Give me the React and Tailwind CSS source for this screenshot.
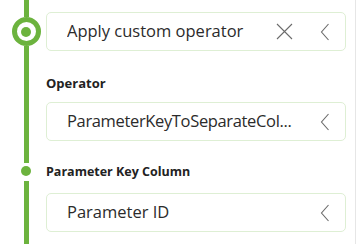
import React from "react";

const GREEN = "bg-[#6cb33e]";

function Chevron() {
  return (
    <svg width="10" height="18" viewBox="0 0 10 18" className="text-[#6b6b6b] shrink-0">
      <path d="M8.5 1 L1.5 9 L8.5 17" fill="none" stroke="currentColor" strokeWidth="1.1" />
    </svg>
  );
}

function XIcon() {
  return (
    <svg width="17" height="17" viewBox="0 0 17 17" className="text-[#6b6b6b]">
      <path d="M1 1 L16 16 M16 1 L1 16" fill="none" stroke="currentColor" strokeWidth="1.1" />
    </svg>
  );
}

function Box({ text, clear, tight }) {
  return (
    <div className="h-[39px] w-[300px] rounded-[5px] border border-[#deefd4] bg-white flex items-center pl-[20px] pr-[15px]">
      <span
        className={`flex-1 min-w-0 whitespace-nowrap overflow-hidden text-[16.5px] text-[#2b2b2b] mr-[20px] ${
          tight ? "tracking-[-0.35px]" : ""
        }`}
      >
        {text}
      </span>
      {clear && (
        <span className="mr-[27px] flex items-center">
          <XIcon />
        </span>
      )}
      <Chevron />
    </div>
  );
}

export default function App() {
  return (
    <div
      className="w-[357px] h-[244px] bg-white flex overflow-hidden"
      style={{ fontFamily: '"Open Sans", "Noto Sans", sans-serif' }}
    >
      <div className="w-[46px] pl-[6px] flex flex-col items-center shrink-0">
        <div className={`h-[17px] w-[5px] ${GREEN}`} />
        <div className="w-[29px] h-[29px] rounded-full border-[5px] border-[#6cb33e] flex items-center justify-center shrink-0">
          <div className={`w-[10px] h-[10px] rounded-full ${GREEN}`} />
        </div>
        <div className={`h-[117px] w-[5px] ${GREEN}`} />
        <div className="h-[3px]" />
        <div className={`w-[10px] h-[10px] rounded-full ${GREEN} shrink-0`} />
        <div className="h-[5px]" />
        <div className={`flex-1 w-[5px] ${GREEN}`} />
      </div>
      <div className="w-[300px] flex flex-col shrink-0">
        <div className="mt-[12px]">
          <Box text="Apply custom operator" clear />
        </div>
        <div className="mt-[24px] h-[18px] flex items-center text-[13px] font-bold text-[#222]">Operator</div>
        <div className="mt-[9px]">
          <Box text="ParameterKeyToSeparateCol..." tight />
        </div>
        <div className="mt-[22px] h-[18px] flex items-center text-[12.5px] font-bold text-[#222]">Parameter Key Column</div>
        <div className="mt-[12px]">
          <Box text="Parameter ID" />
        </div>
      </div>
      <div className="flex-1" />
      <div className="w-[1px] bg-[#e6e6e6]" />
      <div className="w-[1px]" />
    </div>
  );
}
